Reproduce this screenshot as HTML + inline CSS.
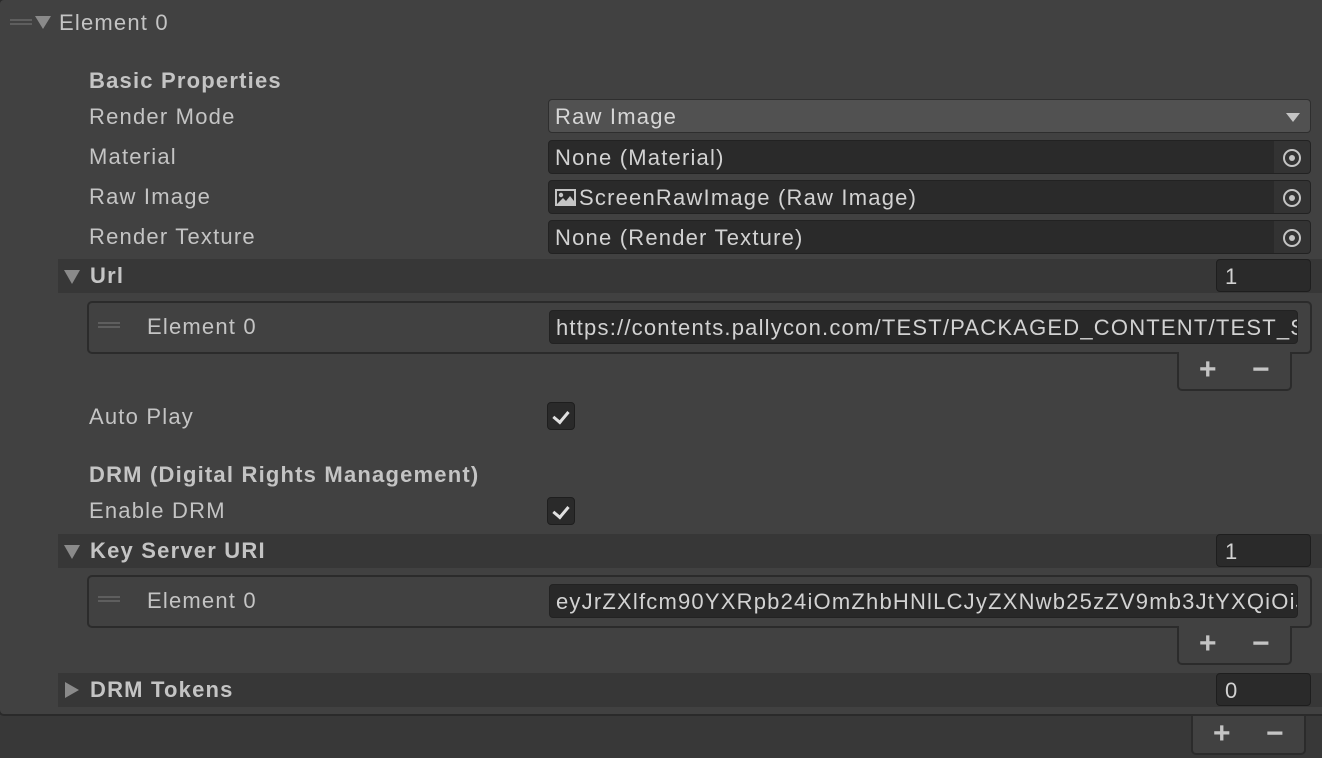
<!DOCTYPE html>
<html><head><meta charset="utf-8"><style>
*{box-sizing:border-box;margin:0;padding:0}
body{width:1322px;height:758px;background:#383838;position:relative;overflow:hidden;font-family:"Liberation Sans",sans-serif;font-size:22px;letter-spacing:1.2px;color:#c4c4c4}
.a{position:absolute}
.panel{left:-2px;top:-2px;width:1330px;height:718px;background:#414141;border:2px solid #2a2a2a;border-radius:6px}
.lbl{position:absolute;left:89px;line-height:24px;white-space:nowrap;margin-top:0px}
.b{font-weight:bold;letter-spacing:1.2px}
.fld{position:absolute;left:548px;width:763px;height:34px;background:#2a2a2a;border:1px solid #222;border-radius:4px;line-height:33px;padding-left:6px;color:#d2d2d2;white-space:nowrap;overflow:hidden}
.pick{position:absolute;right:0;top:0;width:36px;height:32px;background:#333}
.pick:after{content:"";position:absolute;left:9px;top:8px;width:14px;height:14px;border:2px solid #c4c4c4;border-radius:50%}
.pick:before{content:"";position:absolute;left:15px;top:14px;width:6px;height:6px;background:#c4c4c4;border-radius:50%;z-index:1}
.hdr{position:absolute;left:58px;width:1264px;height:34px;background:#373737;line-height:34px}
.hdr .t{position:absolute;left:32px;font-weight:bold;letter-spacing:1.2px}
.tri{position:absolute;left:6px;top:11px;width:0;height:0;border-left:8px solid transparent;border-right:8px solid transparent;border-top:14px solid #8a8a8a}
.trir{position:absolute;left:7px;top:9px;width:0;height:0;border-top:8px solid transparent;border-bottom:8px solid transparent;border-left:14px solid #8a8a8a}
.cnt{position:absolute;left:1158px;top:0;width:95px;height:33px;background:#2a2a2a;border:1px solid #1e1e1e;border-radius:4px;padding-left:8px;line-height:33px;color:#d2d2d2;font-weight:normal}
.box{position:absolute;left:87px;width:1225px;height:53px;border:2px solid #2b2b2b;border-radius:5px}
.drag{position:absolute;width:22px;height:6px;border-top:2px solid #5e5e5e;border-bottom:2px solid #5e5e5e}
.tab{position:absolute;width:115px;height:39px;background:#414141;border:2px solid #2b2b2b;border-top:none;border-radius:0 0 5px 5px}
.tab span{position:absolute;top:3px;font-size:30px;font-weight:bold;color:#c4c4c4;line-height:30px}
.chk{position:absolute;left:547px;width:28px;height:28px;background:#2a2a2a;border:1px solid #1e1e1e;border-radius:4px}
.chk:after{content:"";position:absolute;left:8px;top:5px;width:7px;height:12px;border-right:3px solid #e0e0e0;border-bottom:3px solid #e0e0e0;transform:rotate(40deg)}
</style></head><body>
<div class="a panel"></div>
<div class="drag" style="left:10px;top:19px"></div>
<div class="a" style="left:35px;top:16px;border-left:8px solid transparent;border-right:8px solid transparent;border-top:13px solid #8a8a8a"></div>
<div class="lbl" style="left:59px;top:11px">Element 0</div>

<div class="lbl b" style="top:69px">Basic Properties</div>
<div class="lbl" style="top:105px">Render Mode</div>
<div class="fld" style="top:99px;background:#515151;border-color:#2e2e2e;color:#d6d6d6">Raw Image<div class="a" style="right:10px;top:13px;border-left:7px solid transparent;border-right:7px solid transparent;border-top:9px solid #c4c4c4"></div></div>
<div class="lbl" style="top:145px">Material</div>
<div class="fld" style="top:140px">None (Material)<div class="pick"></div></div>
<div class="lbl" style="top:185px">Raw Image</div>
<div class="fld" style="top:180px;padding-left:30px"><svg class="a" style="left:6px;top:8px" width="21" height="17" viewBox="0 0 21 17"><rect x="1" y="1" width="19" height="15" fill="none" stroke="#c4c4c4" stroke-width="2"/><circle cx="6" cy="6" r="2.2" fill="#c4c4c4"/><path d="M2 15 L8 9 L11 12 L15 7 L19 12 L19 15Z" fill="#c4c4c4"/></svg>ScreenRawImage (Raw Image)<div class="pick"></div></div>
<div class="lbl" style="top:225px">Render Texture</div>
<div class="fld" style="top:220px">None (Render Texture)<div class="pick"></div></div>

<div class="hdr" style="top:259px"><div class="tri"></div><span class="t">Url</span><div class="cnt">1</div></div>
<div class="box" style="top:301px"></div>
<div class="drag" style="left:98px;top:322px"></div>
<div class="lbl" style="left:147px;top:315px">Element 0</div>
<div class="fld" style="left:549px;top:310px;width:749px;height:34px;background:#282828">https://contents.pallycon.com/TEST/PACKAGED_CONTENT/TEST_SIMPLE/dash/stream.mpd</div>
<div class="tab" style="left:1177px;top:352px"><span style="left:20px">+</span><span style="left:73px">−</span></div>

<div class="lbl" style="top:405px">Auto Play</div>
<div class="chk" style="top:402px"></div>
<div class="lbl b" style="top:463px">DRM (Digital Rights Management)</div>
<div class="lbl" style="top:499px">Enable DRM</div>
<div class="chk" style="top:497px"></div>

<div class="hdr" style="top:534px"><div class="tri"></div><span class="t">Key Server URI</span><div class="cnt">1</div></div>
<div class="box" style="top:575px"></div>
<div class="drag" style="left:98px;top:596px"></div>
<div class="lbl" style="left:147px;top:589px">Element 0</div>
<div class="fld" style="left:549px;top:584px;width:749px;height:34px;background:#282828">eyJrZXlfcm90YXRpb24iOmZhbHNlLCJyZXNwb25zZV9mb3JtYXQiOiJvcmlnaW5hbCJ9</div>
<div class="tab" style="left:1177px;top:626px"><span style="left:20px">+</span><span style="left:73px">−</span></div>

<div class="hdr" style="top:673px"><div class="trir"></div><span class="t">DRM Tokens</span><div class="cnt">0</div></div>
<div class="tab" style="left:1191px;top:716px"><span style="left:20px">+</span><span style="left:73px">−</span></div>
</body></html>
